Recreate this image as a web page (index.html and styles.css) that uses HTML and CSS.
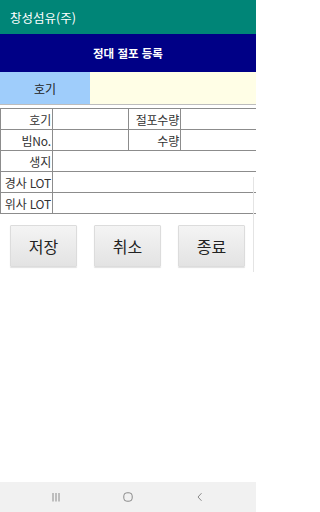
FILE: index.html
```html
<!DOCTYPE html>
<html lang="ko">
<head>
<meta charset="utf-8">
<link rel="stylesheet" href="styles.css">
</head>
<body>
<div class="screen">
  <div class="appbar">창성섬유(주)</div>
  <div class="header">정대 절포 등록</div>
  <div class="hogi-row">
    <div class="hogi-label">호기</div>
    <div class="hogi-value"></div>
  </div>
  <table class="form">
    <colgroup>
      <col class="c1"><col class="c2"><col class="c3"><col class="c4">
    </colgroup>
    <tr><td class="lbl">호기</td><td></td><td class="lbl">절포수량</td><td></td></tr>
    <tr><td class="lbl">빔No.</td><td></td><td class="lbl">수량</td><td></td></tr>
    <tr><td class="lbl">생지</td><td colspan="3"></td></tr>
    <tr><td class="lbl">경사 LOT</td><td colspan="3"></td></tr>
    <tr><td class="lbl">위사 LOT</td><td colspan="3"></td></tr>
  </table>
  <div class="buttons">
    <button class="btn">저장</button>
    <button class="btn">취소</button>
    <button class="btn">종료</button>
  </div>
  <div class="edge"></div>
  <div class="spacer"></div>
  <div class="navbar">
    <svg class="nav-icon" width="12" height="12" viewBox="0 0 12 12"><path d="M3 2v8.5M6 2v8.5M9 2v8.5" stroke="#8a8a8a" stroke-width="1" fill="none"/></svg>
    <svg class="nav-icon" width="12" height="12" viewBox="0 0 12 12"><rect x="1.8" y="1.8" width="8.4" height="8.4" rx="3" stroke="#8a8a8a" stroke-width="1" fill="none"/></svg>
    <svg class="nav-icon" width="12" height="12" viewBox="0 0 12 12"><path d="M7.5 2.2L4 6l3.5 3.8" stroke="#8a8a8a" stroke-width="1" fill="none"/></svg>
  </div>
</div>
</body>
</html>
```
FILE: styles.css
```css
html, body {
  margin: 0;
  padding: 0;
  background: #ffffff;
}
.screen {
  position: relative;
  width: 256px;
  height: 512px;
  display: flex;
  flex-direction: column;
  font-family: "Noto Sans CJK KR", "Noto Sans", sans-serif;
  overflow: hidden;
}
.appbar {
  height: 34px;
  background: #008577;
  color: #ffffff;
  font-size: 12.5px;
  display: flex;
  align-items: center;
  padding-left: 10px;
  padding-top: 1px;
  box-sizing: border-box;
}
.header {
  height: 38px;
  background: #000086;
  color: #ffffff;
  font-size: 11.5px;
  font-weight: bold;
  display: flex;
  align-items: center;
  justify-content: center;
}
.hogi-row {
  height: 32px;
  display: grid;
  grid-template-columns: 90px 1fr;
  border-bottom: 1px solid #bdbdbd;
}
.hogi-label {
  background: #9fcdfb;
  color: #222222;
  font-size: 12px;
  display: flex;
  align-items: center;
  justify-content: center;
}
.hogi-value {
  background: #fffee6;
}
.form {
  margin-top: 3px;
  width: 256px;
  border-collapse: collapse;
  table-layout: fixed;
}
.c1 { width: 52px; }
.c2 { width: 76px; }
.c3 { width: 52px; }
.c4 { width: 76px; }
.form td {
  height: 21px;
  padding: 0 1px 0 0;
  border: 1px solid #8c8c8c;
  font-size: 12px;
  color: #333333;
  white-space: nowrap;
  overflow: hidden;
  box-sizing: border-box;
}
.form td:last-child {
  border-right: none;
}
.form td.lbl {
  text-align: right;
  letter-spacing: -0.2px;
}
.buttons {
  display: flex;
  gap: 17px;
  padding-left: 10px;
  margin-top: 11px;
}
.btn {
  width: 67px;
  height: 42px;
  border: 1px solid #dcdcdc;
  border-radius: 1px;
  background: linear-gradient(#f4f4f4, #e3e3e3);
  box-shadow: 0 1px 1px rgba(0,0,0,0.12);
  font-family: "Noto Sans CJK KR", "Noto Sans", sans-serif;
  font-size: 16px;
  color: #222222;
  padding: 0;
}
.edge {
  position: absolute;
  left: 253px;
  top: 177px;
  width: 1px;
  height: 95px;
  background: #e4e4e4;
}
.spacer {
  flex: 1;
}
.navbar {
  height: 30px;
  background: #f1f1f1;
  display: flex;
  align-items: center;
  justify-content: center;
  gap: 60px;
}
.nav-icon {
  display: block;
}
```
